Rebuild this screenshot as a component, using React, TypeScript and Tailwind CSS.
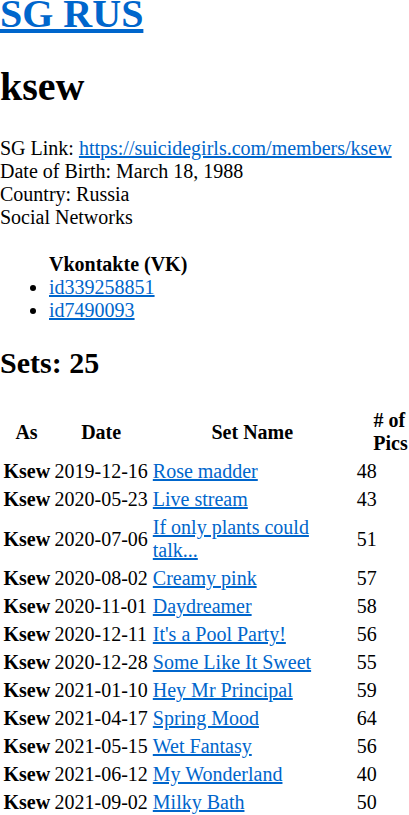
const sets = [
  { date: "2019-12-16", name: "Rose madder", pics: 48 },
  { date: "2020-05-23", name: "Live stream", pics: 43 },
  { date: "2020-07-06", name: "If only plants could talk...", pics: 51 },
  { date: "2020-08-02", name: "Creamy pink", pics: 57 },
  { date: "2020-11-01", name: "Daydreamer", pics: 58 },
  { date: "2020-12-11", name: "It's a Pool Party!", pics: 56 },
  { date: "2020-12-28", name: "Some Like It Sweet", pics: 55 },
  { date: "2021-01-10", name: "Hey Mr Principal", pics: 59 },
  { date: "2021-04-17", name: "Spring Mood", pics: 64 },
  { date: "2021-05-15", name: "Wet Fantasy", pics: 56 },
  { date: "2021-06-12", name: "My Wonderland", pics: 40 },
  { date: "2021-09-02", name: "Milky Bath", pics: 50 },
];

const link = "text-[#0066cc] underline";

export default function App() {
  return (
    <div className="font-['Liberation_Serif','Times_New_Roman',serif] text-[20px] leading-[23px] text-black bg-white -mt-[9.5px]">
      <h1 className="text-[40px] leading-[46px] font-bold mb-[27px]">
        <a href="#" className={link}>SG RUS</a>
      </h1>
      <h1 className="text-[40px] leading-[46px] font-bold mb-[27px]">ksew</h1>

      <div>
        SG Link: <a href="#" className={link}>https://suicidegirls.com/members/ksew</a>
      </div>
      <div>Date of Birth: March 18, 1988</div>
      <div>Country: Russia</div>
      <div>Social Networks</div>

      <ul className="mt-[24px] pl-[49px] list-disc">
        <li className="list-none font-bold">Vkontakte (VK)</li>
        <li><a href="#" className={link}>id339258851</a></li>
        <li><a href="#" className={link}>id7490093</a></li>
      </ul>

      <h2 className="text-[30px] leading-[34.5px] font-bold mt-[24.5px] mb-[25px]">Sets: 25</h2>

      <table className="table-fixed border-separate border-spacing-[2px] w-[409px]">
        <colgroup>
          <col className="w-[49px]" />
          <col className="w-[96.3px]" />
          <col className="w-[202px]" />
          <col className="w-[51.7px]" />
        </colgroup>
        <thead>
          <tr>
            <th className="p-[1.5px] text-center font-bold align-middle">As</th>
            <th className="p-[1.5px] text-center font-bold align-middle">Date</th>
            <th className="p-[1.5px] text-center font-bold align-middle">Set Name</th>
            <th className="p-[1.5px] pl-[18px] text-center font-bold align-middle">
              # of Pics
            </th>
          </tr>
        </thead>
        <tbody>
          {sets.map((s) => (
            <tr key={s.date}>
              <td className="p-[1.5px] align-middle font-bold">Ksew</td>
              <td className="p-[1.5px] align-middle whitespace-nowrap">{s.date}</td>
              <td className="p-[1.5px] align-middle">
                <a href="#" className={link}>{s.name}</a>
              </td>
              <td className="p-[1.5px] align-middle">{s.pics}</td>
            </tr>
          ))}
        </tbody>
      </table>
    </div>
  );
}
